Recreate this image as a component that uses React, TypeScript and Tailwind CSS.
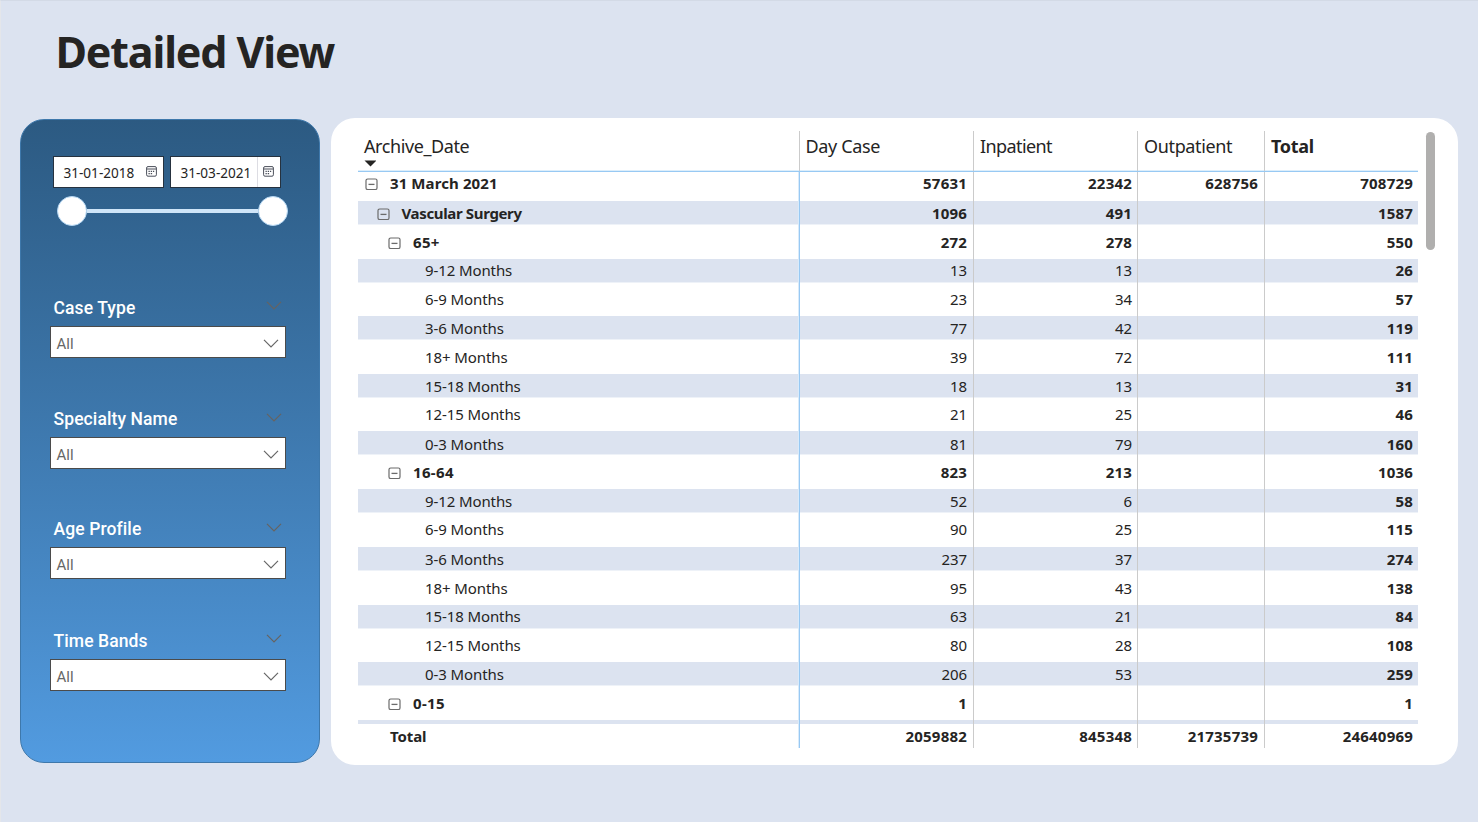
import React from "react";

type Row = { level: number; label: string; values: string[] };

const rows: Row[] = [
  { level: 0, label: "31 March 2021", values: ["57631", "22342", "628756", "708729"] },
  { level: 1, label: "Vascular Surgery", values: ["1096", "491", "", "1587"] },
  { level: 2, label: "65+", values: ["272", "278", "", "550"] },
  { level: 3, label: "9-12 Months", values: ["13", "13", "", "26"] },
  { level: 3, label: "6-9 Months", values: ["23", "34", "", "57"] },
  { level: 3, label: "3-6 Months", values: ["77", "42", "", "119"] },
  { level: 3, label: "18+ Months", values: ["39", "72", "", "111"] },
  { level: 3, label: "15-18 Months", values: ["18", "13", "", "31"] },
  { level: 3, label: "12-15 Months", values: ["21", "25", "", "46"] },
  { level: 3, label: "0-3 Months", values: ["81", "79", "", "160"] },
  { level: 2, label: "16-64", values: ["823", "213", "", "1036"] },
  { level: 3, label: "9-12 Months", values: ["52", "6", "", "58"] },
  { level: 3, label: "6-9 Months", values: ["90", "25", "", "115"] },
  { level: 3, label: "3-6 Months", values: ["237", "37", "", "274"] },
  { level: 3, label: "18+ Months", values: ["95", "43", "", "138"] },
  { level: 3, label: "15-18 Months", values: ["63", "21", "", "84"] },
  { level: 3, label: "12-15 Months", values: ["80", "28", "", "108"] },
  { level: 3, label: "0-3 Months", values: ["206", "53", "", "259"] },
  { level: 2, label: "0-15", values: ["1", "", "", "1"] },
];

// Whole-pixel row heights and text offsets that spread a fractional row pitch.
const rowHeights = [29, 29, 29, 28, 29, 29, 29, 29, 28, 29, 29, 29, 29, 29, 29, 28, 29, 29, 29];
const textOffsets = [0, 1, 1, 0, 1, 1, 1, 1, 0, 2, 1, 1, 0, 1, 1, 0, 1, 1, 1];

const indents = ["pl-[7px]", "pl-[18.5px]", "pl-[30px]", "pl-[67px]"];
const columns = "grid grid-cols-[441px_174px_164px_127px_154px]";
const bold = "font-bold text-[15px] tracking-[0.2px]";
const regular = "font-normal text-[15px] tracking-[-0.1px]";
const labelTracking = ["tracking-[0.1px]", "tracking-[-0.35px]", "tracking-[0.35px]", "tracking-[-0.1px]"];
const cellEdges = [
  "border-l-[#98c9f3] shadow-[-1px_0_0_#d9ebfb] pr-[6px]",
  "border-l-[#cbcbcb] pr-[5px]",
  "border-l-[#cbcbcb] pr-[6px]",
  "border-l-[#cbcbcb] pr-[5px]",
];

function Collapse() {
  return (
    <svg width="13" height="13" viewBox="0 0 13 13" fill="none" stroke="#6b6b6b" className="mr-3 mt-[5.5px] shrink-0">
      <rect x="1" y="1" width="11" height="10.5" rx="1.6" strokeWidth="1.2" />
      <path d="M3.5 6.4h6" strokeWidth="1.3" />
    </svg>
  );
}

function Calendar() {
  return (
    <svg width="11" height="11" viewBox="0 0 11 11" fill="none" stroke="#4b4f5a">
      <rect x="0.6" y="0.6" width="9.8" height="9.6" rx="1.4" />
      <path d="M1 3h9" />
      <path d="M2.5 5.3h6.5M2.5 7.6h4.5" strokeWidth="1.2" strokeDasharray="1.3 0.9" />
    </svg>
  );
}

function Chevron({ color }: { color: string }) {
  return (
    <svg width="16" height="9" viewBox="0 0 16 9" fill="none" stroke={color} strokeWidth="1.2">
      <path d="M1 0.8 8 7.8 15 0.8" />
    </svg>
  );
}

function DateBox({ value, divided }: { value: string; divided?: boolean }) {
  return (
    <div className="flex h-8 w-[111px] border border-[#26323f] bg-white text-[#252423]">
      <span className="w-[86px] pl-[9.5px] pt-[6px] text-[13.6px] leading-[20px] tracking-[-0.02px] whitespace-nowrap">{value}</span>
      <span className={divided ? "flex-1 border-l border-[#dddde3] pl-[5px] pt-[8.5px]" : "flex-1 pl-[6px] pt-[8.5px]"}>
        <Calendar />
      </span>
    </div>
  );
}

function Filter({ label, tight, lift }: { label: string; tight?: boolean; lift?: boolean }) {
  return (
    <div className={tight ? "h-[110px]" : "h-[111px]"}>
      <div className="flex h-[29px] items-start justify-between pl-[3.5px] pr-[8px] font-[Roboto,sans-serif]">
        <span className="text-[17.5px] font-medium leading-[22px] tracking-[0.1px] text-white">{label}</span>
        <span className={lift ? "pt-[4px]" : "pt-[5px]"}>
          <Chevron color="#666361" />
        </span>
      </div>
      <div className="flex h-[31.5px] w-[235.5px] items-center justify-between border border-[#4b4b4b] bg-white pl-[5.5px] pr-[6px] pt-[3px] font-[Roboto,sans-serif]">
        <span className="pt-px text-[15px] text-[#666]">All</span>
        <Chevron color="#666" />
      </div>
    </div>
  );
}

function ValueCell({ value, index, strong, offset = 0 }: { value: string; index: number; strong: boolean; offset?: number }) {
  return (
    <div
      className={`flex justify-end border-l leading-[22px] ${cellEdges[index]} ${strong || index === 3 ? bold : regular}`}
      style={{ paddingTop: offset }}
    >
      {value}
    </div>
  );
}

export default function App() {
  return (
    <div className="h-[822px] w-[1478px] overflow-hidden border-l border-t border-l-[#e4e6ea] border-t-[#d3dae6] bg-[#dce3f0] font-['Noto_Sans','Open_Sans',sans-serif] text-[#252423]">
      <header className="h-[117px] pl-[54.5px] pt-[22px]">
        <h1 className="text-[43px] font-bold leading-[58px] tracking-[-1.15px]">Detailed View</h1>
      </header>
      <main className="flex items-start pl-[19px]">
        <aside className="mt-px h-[644px] w-[300px] rounded-[24px] border border-[#3e78ab] bg-linear-to-b from-[#2c5a82] to-[#529be0] px-[29px] pt-[36px]">
          <div className="flex gap-[6px] pl-[3px]">
            <DateBox value="31-01-2018" />
            <DateBox value="31-03-2021" divided />
          </div>
          <div className="mt-2 flex h-[30px] w-[231px] items-center ml-[6.5px]">
            <span className="size-[30px] rounded-full border border-[#b5d7f3] bg-white" />
            <span className="h-1 flex-1 bg-[#cfe5f8]" />
            <span className="size-[30px] rounded-full border border-[#b5d7f3] bg-white" />
          </div>
          <div className="mt-[71px]">
            <Filter label="Case Type" lift />
            <Filter label="Specialty Name" tight />
            <Filter label="Age Profile" />
            <div className="pt-px">
              <Filter label="Time Bands" lift />
            </div>
          </div>
        </aside>
        <section className="ml-[11px] flex h-[647px] w-[1127px] rounded-[24px] bg-white pl-[27px] pt-[13px]">
          <div className="w-[1060px]">
            <div className={`${columns} h-[41px] border-b border-b-[#98c9f3] text-[18px] leading-[31px] shadow-[inset_0_-1px_0_#dceefb]`}>
              <div className="pl-[6px]">
                <div className="h-[29px] tracking-[-0.4px]">Archive_Date</div>
                <svg width="12" height="7" viewBox="0 0 12 7">
                  <path d="M0.5 0.5h12L6.5 6.5z" fill="#252423" />
                </svg>
              </div>
              <div className="border-l border-l-[#cbcbcb] pl-[5.5px] tracking-[-0.35px]">Day Case</div>
              <div className="border-l border-l-[#cbcbcb] pl-[6px] tracking-[-0.6px]">Inpatient</div>
              <div className="border-l border-l-[#cbcbcb] pl-[6px] tracking-[-0.35px]">Outpatient</div>
              <div className="border-l border-l-[#cbcbcb] pl-[6px] font-bold tracking-[-0.3px]">Total</div>
            </div>
            <div className="h-[552px] overflow-hidden">
              {rows.map((row, i) => (
                <div
                  key={i}
                  className={`${columns} ${i % 2 ? "bg-[linear-gradient(#dce3f0_23px,#eef2f8_23px,#eef2f8_24px,white_24px)]" : "bg-white"}`}
                  style={{ height: rowHeights[i] }}
                >
                  <div
                    className={`flex items-start leading-[22px] text-[15px] ${indents[row.level]} ${labelTracking[row.level]} ${row.level < 3 ? "font-bold" : "font-normal"}`}
                    style={{ paddingTop: textOffsets[i] }}
                  >
                    {row.level < 3 && <Collapse />}
                    {row.label}
                  </div>
                  {row.values.map((v, j) => (
                    <ValueCell key={j} value={v} index={j} strong={row.level < 3} offset={textOffsets[i]} />
                  ))}
                </div>
              ))}
              <div className={`${columns} h-[29px] bg-[#dce3f0]`}>
                <div />
                {["", "", "", ""].map((v, j) => (
                  <ValueCell key={j} value={v} index={j} strong />
                ))}
              </div>
            </div>
            <div className={`${columns} h-[24px]`}>
              <div className="pl-[32px] pt-px text-[15px] font-bold leading-[22px] tracking-[-0.1px]">Total</div>
              {["2059882", "845348", "21735739", "24640969"].map((v, j) => (
                <ValueCell key={j} value={v} index={j} strong offset={1} />
              ))}
            </div>
          </div>
          <div className="ml-2 mt-px h-[118px] w-[9px] rounded-full bg-[#b0afae]" />
        </section>
      </main>
    </div>
  );
}
